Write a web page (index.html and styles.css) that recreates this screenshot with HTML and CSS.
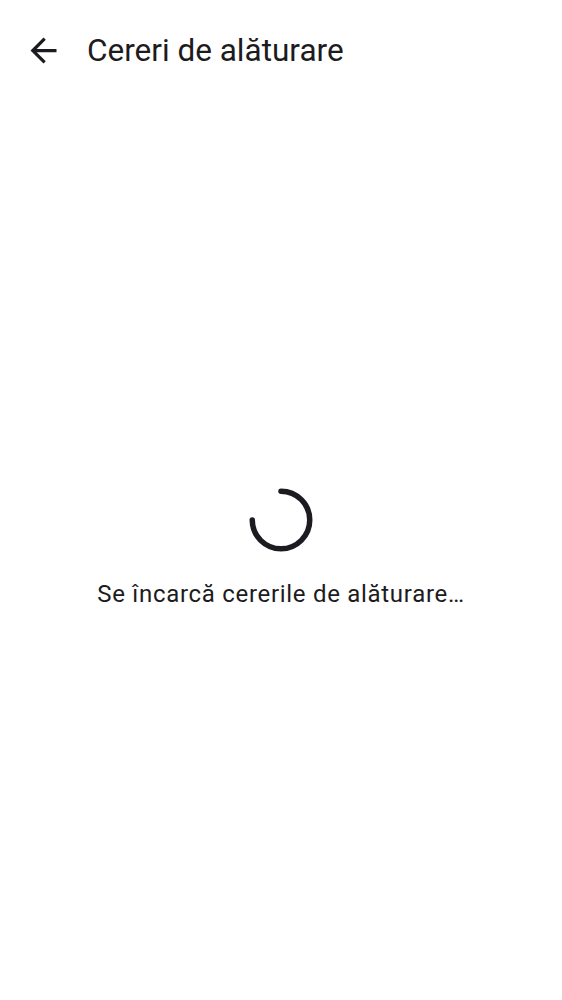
FILE: index.html
```html
<!DOCTYPE html>
<html lang="ro">
<head>
<meta charset="utf-8">
<link rel="stylesheet" href="styles.css">
</head>
<body>
<div class="screen">
  <header class="appbar">
    <button class="back" aria-label="Înapoi">
      <svg viewBox="0 0 24 24" width="39" height="39"><path d="M20 11H7.83l5.59-5.59L12 4l-8 8 8 8 1.41-1.41L7.83 13H20v-2z" fill="#1d1b20"/></svg>
    </button>
    <h1 class="title">Cereri de alăturare</h1>
  </header>
  <main class="content">
    <svg class="spinner" viewBox="0 0 64 64" width="64" height="64">
      <path d="M32 3.25 A28.75 28.75 0 1 1 3.25 32" fill="none" stroke="#1d1b20" stroke-width="5.5" stroke-linecap="round"/>
    </svg>
    <p class="msg">Se încarcă cererile de alăturare…</p>
  </main>
</div>
</body>
</html>
```

FILE: styles.css
```css
html, body {
  margin: 0;
  padding: 0;
  background: #ffffff;
}
.screen {
  width: 562px;
  height: 1000px;
  display: flex;
  flex-direction: column;
  font-family: Roboto, "Noto Sans", sans-serif;
  color: #1d1b20;
}
.appbar {
  height: 100px;
  padding-top: 1px;
  box-sizing: border-box;
  display: flex;
  align-items: center;
  flex-shrink: 0;
}
.back {
  width: 48px;
  height: 48px;
  margin-left: 19px;
  padding: 0;
  border: 0;
  background: none;
  display: flex;
  align-items: center;
  justify-content: center;
}
.title {
  margin: 0 0 0 20px;
  font-size: 31.5px;
  font-weight: 400;
  line-height: 40px;
}
.content {
  flex: 1;
  display: flex;
  flex-direction: column;
  align-items: center;
  justify-content: center;
}
.spinner {
  display: block;
}
.msg {
  margin: 24px 0 0 0;
  font-size: 24px;
  line-height: 36px;
  letter-spacing: 0.7px;
}
```
